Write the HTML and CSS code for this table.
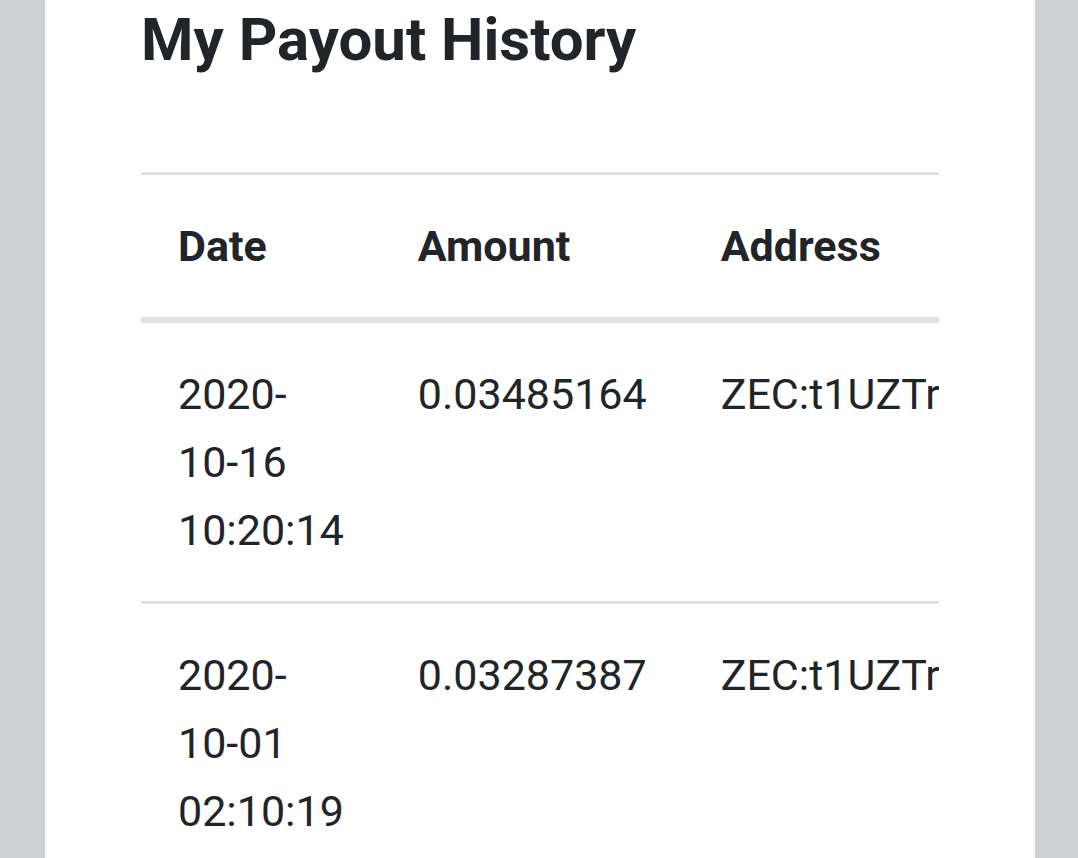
FILE: index.html
```html
<!DOCTYPE html>
<html lang="en">
<head>
    <meta charset="UTF-8">
    <meta name="viewport" content="width=device-width, initial-scale=1.0">
    <title>My Payout History</title>
    <link rel="stylesheet" href="styles.css">
</head>
<body>
    <div class="card">
        <h2 class="title">My Payout History</h2>
        <div class="tableWrap">
            <table class="table">
                <thead>
                    <tr>
                        <th>Date</th>
                        <th>Amount</th>
                        <th>Address</th>
                    </tr>
                </thead>
                <tbody>
                    <tr>
                        <td>2020-10-16 10:20:14</td>
                        <td>0.03485164</td>
                        <td>ZEC:t1UZTr1q8vN3mPxW5dGhJ2sLc7bYfR4eA9T</td>
                    </tr>
                    <tr>
                        <td>2020-10-01 02:10:19</td>
                        <td>0.03287387</td>
                        <td>ZEC:t1UZTr1q8vN3mPxW5dGhJ2sLc7bYfR4eA9T</td>
                    </tr>
                </tbody>
            </table>
        </div>
    </div>
</body>
</html>
```

FILE: styles.css
```css
* {
    margin: 0;
    padding: 0;
    box-sizing: border-box;
}

body {
    background: #d0d1d4;
    font-family: Roboto, "Liberation Sans", sans-serif;
    color: #212529;
}

.card {
    margin: 0 43px 0 45px;
    min-height: 858px;
    background: #ffffff;
    padding: 4px 96px 0;
}

.title {
    font-size: 60px;
    font-weight: 700;
    line-height: 72px;
    margin-bottom: 96px;
}

.tableWrap {
    width: 100%;
    overflow: hidden;
}

.table {
    width: 100%;
    border-collapse: collapse;
    font-size: 43px;
    line-height: 68px;
}

.table th,
.table td {
    padding: 37px;
    text-align: left;
    vertical-align: top;
    border-top: 3px solid #dee2e6;
}

.table th {
    font-weight: 700;
}

.table thead th {
    border-bottom: 6px solid #dee2e6;
}
```
